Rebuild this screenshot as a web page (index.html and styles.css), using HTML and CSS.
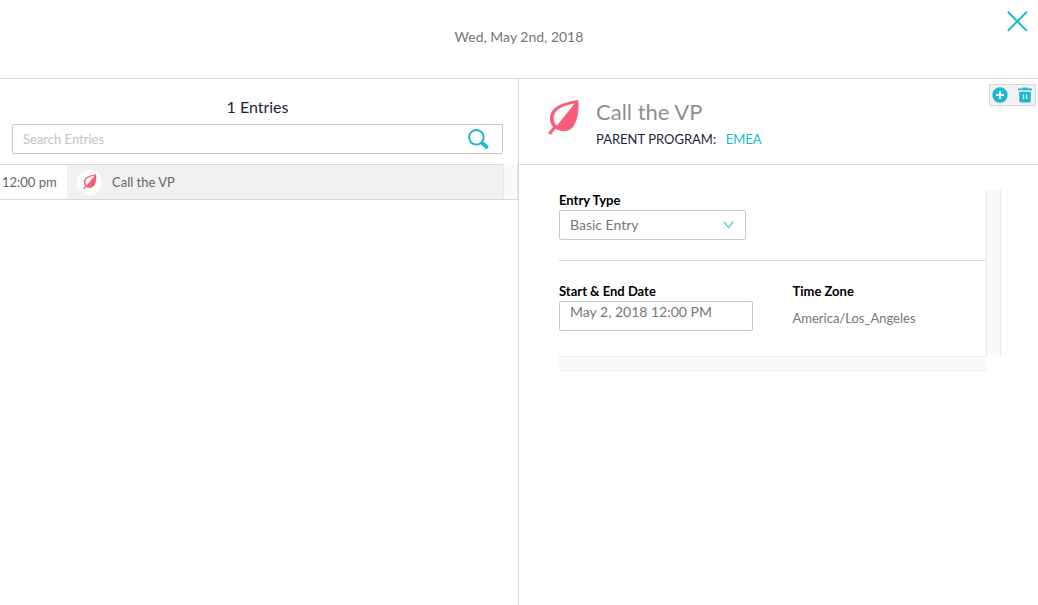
FILE: index.html
```html
<!DOCTYPE html>
<html lang="en">
<head>
<meta charset="utf-8">
<title>Entries</title>
<link rel="stylesheet" href="styles.css">
</head>
<body>
<svg class="defs" width="0" height="0" aria-hidden="true">
  <symbol id="leaf" viewBox="0 0 32 36">
    <path fill="#f95d7b" fill-rule="evenodd" d="M30.300 0C30.900 9 30.300 16 27.300 23C24.500 29.300 20 31.300 15 31.200C11.500 31 9 30 7.500 28.800L2.600 34.900L.3 32.800L5 27C2.700 24 1.700 21 2 17.500C2.600 7.500 13 2.500 30.300 0ZM26.800 3.300C15 5.800 6 9.500 5.600 17.500C5.400 21 6.500 23.700 9 25.600Z"/>
  </symbol>
</svg>
<div class="page">
  <header class="topbar">
    <span class="date">Wed, May 2nd, 2018</span>
    <svg class="close" width="22" height="22" viewBox="0 0 22 22"><path d="M1.800.800L20.900 19.900M20.900.800L1.800 19.900" stroke="#1cb9d2" stroke-width="2" fill="none"/></svg>
  </header>
  <main class="columns">
    <section class="list">
      <h2 class="count">1 Entries</h2>
      <div class="search">
        <span>Search Entries</span>
        <svg width="22" height="21" viewBox="0 0 22 21"><circle cx="8.400" cy="8.300" r="7.300" stroke="#1cb9d2" stroke-width="2" fill="none"/><path d="M13.200 13L15 14.300" stroke="#1cb9d2" stroke-width="2"/><path d="M14.700 14.500L18.500 17.800" stroke="#1cb9d2" stroke-width="4" stroke-linecap="round"/></svg>
      </div>
      <div class="row">
        <span class="time">12:00 pm</span>
        <div class="entry"><span class="badge"><svg width="14" height="16"><use href="#leaf"/></svg></span><span>Call the VP</span></div>
        <div class="track"></div>
      </div>
    </section>
    <section class="detail">
      <div class="head">
        <svg class="leaf" width="32" height="36"><use href="#leaf"/></svg>
        <div>
          <h1 class="title">Call the VP</h1>
          <div class="parent">PARENT PROGRAM:<a class="link">EMEA</a></div>
        </div>
        <div class="tools">
          <svg width="16" height="16" viewBox="0 0 16 16"><circle cx="8" cy="8" r="7.700" fill="#1cb9d2"/><path d="M8 4V12M4 8H12" stroke="#f1f1f1" stroke-width="2"/></svg>
          <svg width="14" height="16" viewBox="0 0 14 16"><path fill="#1cb9d2" d="M4.500 .5H9.500V1.500H14V3.200H0V1.500H4.500ZM1 4.800H13L12.600 14Q12.500 15.500 11 15.500H3Q1.500 15.500 1.400 14Z"/><path d="M5.500 7.500V12M8.500 7.500V12" stroke="#f1f1f1" stroke-width="1.300"/></svg>
        </div>
      </div>
      <div class="form">
        <div class="type">
          <label class="label">Entry Type</label>
          <div class="field select"><span>Basic Entry</span><svg width="11" height="8" viewBox="0 0 11 8"><path d="M.8.700L5.500 6.700L10.200.700" fill="none" stroke="#42c6da" stroke-width="1.100"/></svg></div>
        </div>
        <div class="vtrack"></div>
        <div class="schedule">
          <div class="dates">
            <label class="label">Start &amp; End Date</label>
            <div class="field when">May 2, 2018 12:00 PM</div>
          </div>
          <div>
            <label class="label">Time Zone</label>
            <div class="zone">America/Los_Angeles</div>
          </div>
        </div>
        <div class="htrack"></div>
      </div>
    </section>
  </main>
</div>
</body>
</html>
```
FILE: styles.css
```css
* { box-sizing: border-box; }
body { margin: 0; background: #fff; font-family: Lato, "Liberation Sans", sans-serif; font-size: 13px; color: #777; }
svg { display: block; flex: none; }
.defs { position: absolute; }
.page { height: 605px; display: flex; flex-direction: column; overflow: hidden; }
.topbar { position: relative; height: 79px; flex: none; border-bottom: 1px solid #d8d8d8; text-align: center; padding-top: 27px; }
.date { font-size: 14px; line-height: 20px; }
.close { position: absolute; top: 11px; right: 10px; }
.columns { flex: 1; display: grid; grid-template-columns: 519px 1fr; }
.list { border-right: 1px solid #d8d8d8; padding-top: 18px; }
.count { margin: 0 3px 7px 0; text-align: center; font-weight: 400; font-size: 16px; line-height: 20px; color: #231f40; }
.search { display: flex; align-items: center; justify-content: space-between; width: 491px; height: 30px; margin-left: 12px; padding: 0 12px 0 10px; border: 1px solid #c8c8c8; border-radius: 2px; color: #c4c4c4; }
.row { display: flex; height: 36px; margin-top: 10px; border: solid #d8d8d8; border-width: 1px 0; line-height: 34px; color: #666; }
.time { width: 67px; padding-left: 2px; }
.entry { flex: 1; display: flex; align-items: center; gap: 10px; padding-left: 10px; background: #f1f1f1; }
.badge { display: flex; align-items: center; justify-content: center; width: 25px; height: 25px; border-radius: 50%; background: #fff; }
.track { width: 15px; margin-top: -1px; background: #fafafa; border: solid #e8e8e8; border-width: 0 1px; }
.head { position: relative; display: flex; gap: 16px; height: 86px; padding: 20px 0 0 29px; border-bottom: 1px solid #d8d8d8; }
.leaf { margin-top: 1px; }
.title { margin: 0; font-weight: 400; font-size: 22px; line-height: 26px; color: #8f8f8f; }
.parent { margin-top: 6px; line-height: 16px; color: #231f40; }
.link { margin-left: 9.5px; color: #1cb9d2; }
.tools { position: absolute; top: 5px; right: 2px; width: 47px; height: 22px; display: flex; align-items: center; justify-content: space-between; padding: 0 3px 0 2px; background: #f1f1f1; border: 1px solid #d8d8d8; }
.form { display: grid; grid-template-columns: 427px 15px; grid-template-rows: 71px 95px 15px; margin: 25px 0 0 40px; }
.type { border-bottom: 1px solid #d8d8d8; padding-top: 2px; }
.label { display: block; font-weight: 700; line-height: 16px; color: #000; }
.field { height: 30px; margin-top: 2px; padding: 0 10px; border: 1px solid #c8c8c8; border-radius: 2px; font-size: 14px; }
.select { display: flex; align-items: center; justify-content: space-between; width: 187px; padding-right: 11px; }
.select span { padding-bottom: 1px; line-height: 18px; }
.vtrack { grid-column: 2; grid-row: 1 / 3; background: #fafafa; border: solid #e8e8e8; border-width: 0 1px; }
.schedule { display: flex; gap: 39.5px; padding-top: 22px; }
.dates { width: 194px; }
.when { line-height: 20px; }
.zone { margin-top: 11px; line-height: 16px; color: #777; }
.htrack { background: #fafafa; border: solid #e8e8e8; border-width: 1px 0; }
```
